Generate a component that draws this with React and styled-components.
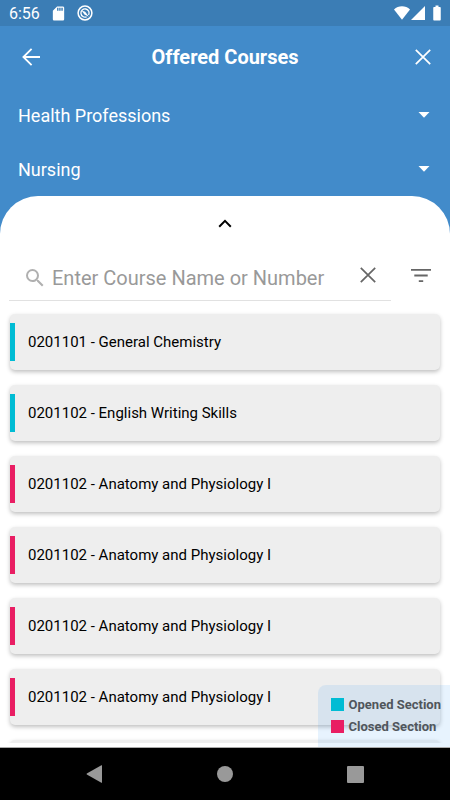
import React, { useState } from 'react'
import styled, { createGlobalStyle } from 'styled-components';
import { MdSdCard, MdBatteryFull, MdSearch } from 'react-icons/md';

const courses = [
    { id: 1, title: "0201101 - General Chemistry", open: true },
    { id: 2, title: "0201102 - English Writing Skills", open: true },
    { id: 3, title: "0201102 - Anatomy and Physiology I", open: false },
    { id: 4, title: "0201102 - Anatomy and Physiology I", open: false },
    { id: 5, title: "0201102 - Anatomy and Physiology I", open: false },
    { id: 6, title: "0201102 - Anatomy and Physiology I", open: false },
    { id: 7, title: "", open: false },
];

const CrossIcon = () => (
    <svg width="16" height="16" viewBox="0 0 16 16" fill="none" stroke="currentColor" strokeWidth="1.7">
        <path d="M0.8 0.8 15.2 15.2M15.2 0.8 0.8 15.2" />
    </svg>
);

const Dropdown = ({ label, options }) => (
    <DropdownRow>
        <Select aria-label={label}>
            {options.map((option) => <option key={option}>{option}</option>)}
        </Select>
        <Caret width="12" height="6" viewBox="0 0 12 6" aria-hidden="true">
            <path d="M0.5 0h11L6 5.8z" fill="#fff" />
        </Caret>
    </DropdownRow>
);

const App = () => {
    const [search, setSearch] = useState("");

    return (
        <Screen>
            <GlobalStyle />
            <StatusBar>
                <StatusGroup $gap="10px">
                    <span>6:56</span>
                    <MdSdCard size={17} />
                    <svg width="16" height="16" viewBox="0 0 16 16" fill="none" stroke="#fff">
                        <circle cx="8" cy="8" r="6.9" strokeWidth="1.5" />
                        <path d="M11.6 10A4.1 4.1 0 1 0 9.6 11.8" strokeWidth="1.3" />
                        <path d="M4.6 5.6 8.2 6.8 11.8 11.8 7.4 9.4z" fill="#fff" stroke="none" />
                    </svg>
                </StatusGroup>
                <StatusGroup $gap="0px">
                    <svg width="16" height="14" viewBox="0 0 16 14" fill="#fff">
                        <path d="M8 13.8 0 3.6C2.2 1.4 5 0.3 8 0.3s5.8 1.1 8 3.3z" />
                    </svg>
                    <svg width="16" height="14" viewBox="0 0 16 14" fill="#fff">
                        <path d="M15 0v14H1z" />
                    </svg>
                    <Battery size={18} />
                </StatusGroup>
            </StatusBar>

            <Header>
                <IconButton aria-label="Back">
                    <svg width="26" height="18" viewBox="-8 0 26 18" fill="none" stroke="currentColor" strokeWidth="1.8">
                        <path d="M9.6 0.9 1.4 9 9.6 17.1M1.4 9H18" />
                    </svg>
                </IconButton>
                <Title>Offered Courses</Title>
                <IconButton aria-label="Close"><CrossIcon /></IconButton>
            </Header>
            <Dropdown label="Faculty" options={["Health Professions"]} />
            <Dropdown label="Department" options={["Nursing"]} />

            <Panel>
                <Toggle aria-label="Collapse filters">
                    <svg width="14" height="9" viewBox="0 0 14 9" fill="none" stroke="#000" strokeWidth="2">
                        <path d="M1.2 7.7 7 1.9 12.8 7.7" />
                    </svg>
                </Toggle>
                <SearchRow>
                    <SearchBox>
                        <SearchLabel htmlFor="course-search" aria-label="Search courses">
                            <MdSearch size={24} />
                        </SearchLabel>
                        <SearchInput
                            id="course-search"
                            placeholder="Enter Course Name or Number"
                            value={search}
                            onChange={(e) => setSearch(e.target.value)}
                        />
                        <SearchButton aria-label="Clear" onClick={() => setSearch("")}>
                            <CrossIcon />
                        </SearchButton>
                    </SearchBox>
                    <FilterButton aria-label="Filter">
                        <svg width="20" height="13" viewBox="0 0 20 13" fill="currentColor">
                            <path d="M0 0h20v1.8H0zM3.3 5.6h13.4v1.8H3.3zM7.8 11.2h4.4V13H7.8z" />
                        </svg>
                    </FilterButton>
                </SearchRow>
                <CourseList>
                    {courses.map((course) => (
                        <li key={course.id}>
                            <CourseCard>
                                <Stripe $open={course.open} />
                                <span>{course.title}</span>
                            </CourseCard>
                        </li>
                    ))}
                </CourseList>
                <Legend>
                    <LegendItem><Swatch $open /><span>Opened Section</span></LegendItem>
                    <LegendItem><Swatch /><span>Closed Section</span></LegendItem>
                </Legend>
            </Panel>

            <NavBar>
                <NavButton aria-label="System back">
                    <svg width="18" height="18" viewBox="0 0 18 18" fill="#999">
                        <path d="M16 0.6v16.8q0 .6-.6.4L0.8 9.4q-.5-.4 0-.8L15.4 0.2q.6-.2.6.4z" />
                    </svg>
                </NavButton>
                <NavButton aria-label="Home">
                    <svg width="16" height="16" viewBox="0 0 16 16" fill="#999">
                        <circle cx="8" cy="8" r="8" />
                    </svg>
                </NavButton>
                <NavButton aria-label="Recent apps">
                    <svg width="17" height="17" viewBox="0 0 17 17" fill="#999">
                        <rect width="17" height="17" rx="1" />
                    </svg>
                </NavButton>
            </NavBar>
        </Screen>
    );
}

const GlobalStyle = createGlobalStyle`
    * {
        box-sizing: border-box;
    }

    body {
        margin: 0;
        font-family: Roboto, sans-serif;
    }

    button {
        border: 0;
        padding: 0;
        background: none;
        color: inherit;
        font: inherit;
        cursor: pointer;
    }

    svg {
        display: block;
        flex-shrink: 0;
    }
`;

const Screen = styled.div`
    height: 100vh;
    display: flex;
    flex-direction: column;
    background-color: #428bca;
    color: #fff;
`;

const StatusBar = styled.div`
    height: 26px;
    flex-shrink: 0;
    padding: 0 4px 0 9px;
    display: flex;
    justify-content: space-between;
    align-items: center;
    background-color: #3b7db5;
    font-size: 16px;
`;

const StatusGroup = styled.div`
    display: flex;
    align-items: center;
    gap: ${(props) => props.$gap};
`;

const Battery = styled(MdBatteryFull)`
    margin-left: 2px;
`;

const Header = styled.header`
    height: 62px;
    flex-shrink: 0;
    padding: 0 10px;
    display: flex;
    justify-content: space-between;
    align-items: center;
`;

const IconButton = styled.button`
    width: 34px;
    height: 34px;
    display: flex;
    justify-content: center;
    align-items: center;
`;

const Title = styled.h1`
    margin: 0;
    font-size: 20px;
    font-weight: 700;
`;

const DropdownRow = styled.div`
    height: 54px;
    flex-shrink: 0;
    display: grid;
    align-items: center;
`;

const Select = styled.select`
    grid-area: 1 / 1;
    width: 100%;
    height: 100%;
    padding: 0 40px 0 18px;
    border: 0;
    appearance: none;
    background: none;
    color: #fff;
    font: inherit;
    font-size: 18px;

    option {
        color: #000;
    }
`;

const Caret = styled.svg`
    grid-area: 1 / 1;
    justify-self: end;
    margin-right: 20px;
    pointer-events: none;
`;

const Panel = styled.main`
    position: relative;
    flex: 1;
    min-height: 0;
    padding-bottom: 4px;
    display: flex;
    flex-direction: column;
    overflow: hidden;
    border-radius: 38px 38px 0 0;
    background-color: #fff;
    color: #000;
`;

const Toggle = styled.button`
    height: 54px;
    flex-shrink: 0;
    display: flex;
    justify-content: center;
    align-items: center;
`;

const SearchRow = styled.div`
    height: 51px;
    flex-shrink: 0;
    padding-left: 9px;
    display: flex;
    color: #666;
`;

const SearchBox = styled.div`
    flex: 1;
    min-width: 0;
    padding-left: 14px;
    display: flex;
    align-items: center;
    border-bottom: 1px solid #e1e1e1;
`;

const SearchLabel = styled.label`
    padding-top: 5px;
    color: #b0b0b0;
`;

const SearchInput = styled.input`
    flex: 1;
    min-width: 0;
    height: 100%;
    padding: 5px 0 0 5px;
    border: 0;
    outline: 0;
    background: none;
    font: inherit;
    font-size: 20px;

    &::placeholder {
        color: #999;
        opacity: 1;
    }
`;

const SearchButton = styled.button`
    width: 46px;
    height: 46px;
    display: flex;
    justify-content: center;
    align-items: center;
`;

const FilterButton = styled(SearchButton)`
    width: 59px;
    height: 50px;
`;

const CourseList = styled.ul`
    flex: 1;
    min-height: 0;
    margin: 0;
    padding: 13px 10px 0;
    overflow: hidden;
    list-style: none;
    display: flex;
    flex-direction: column;
    gap: 15px;
`;

const CourseCard = styled.button`
    width: 100%;
    height: 56px;
    display: flex;
    align-items: center;
    gap: 13px;
    border-radius: 5px;
    background-color: #eee;
    box-shadow: 0 2px 4px rgba(0, 0, 0, 0.25);
    font-size: 15px;
    text-align: left;
`;

const Stripe = styled.span`
    width: 5px;
    height: 38px;
    background-color: ${(props) => (props.$open ? "#00bcd4" : "#e91e63")};
`;

const Legend = styled.div`
    position: absolute;
    right: 0;
    bottom: 0;
    padding: 8px 9px 10px 13px;
    border-radius: 8px 0 0 0;
    background-color: rgba(33, 150, 243, 0.11);
`;

const LegendItem = styled.div`
    height: 22px;
    display: flex;
    align-items: center;
    gap: 5px;
    color: #50565c;
    font-size: 13px;
    font-weight: 700;
`;

const Swatch = styled.span`
    width: 13px;
    height: 13px;
    background-color: ${(props) => (props.$open ? "#00bcd4" : "#e91e63")};
`;

const NavBar = styled.nav`
    height: 53px;
    flex-shrink: 0;
    padding: 0 30px;
    display: grid;
    grid-template-columns: repeat(3, 1fr);
    border-top: 1px solid #aaa;
    background-color: #000;
`;

const NavButton = styled.button`
    display: flex;
    justify-content: center;
    align-items: center;
`;

export default App
